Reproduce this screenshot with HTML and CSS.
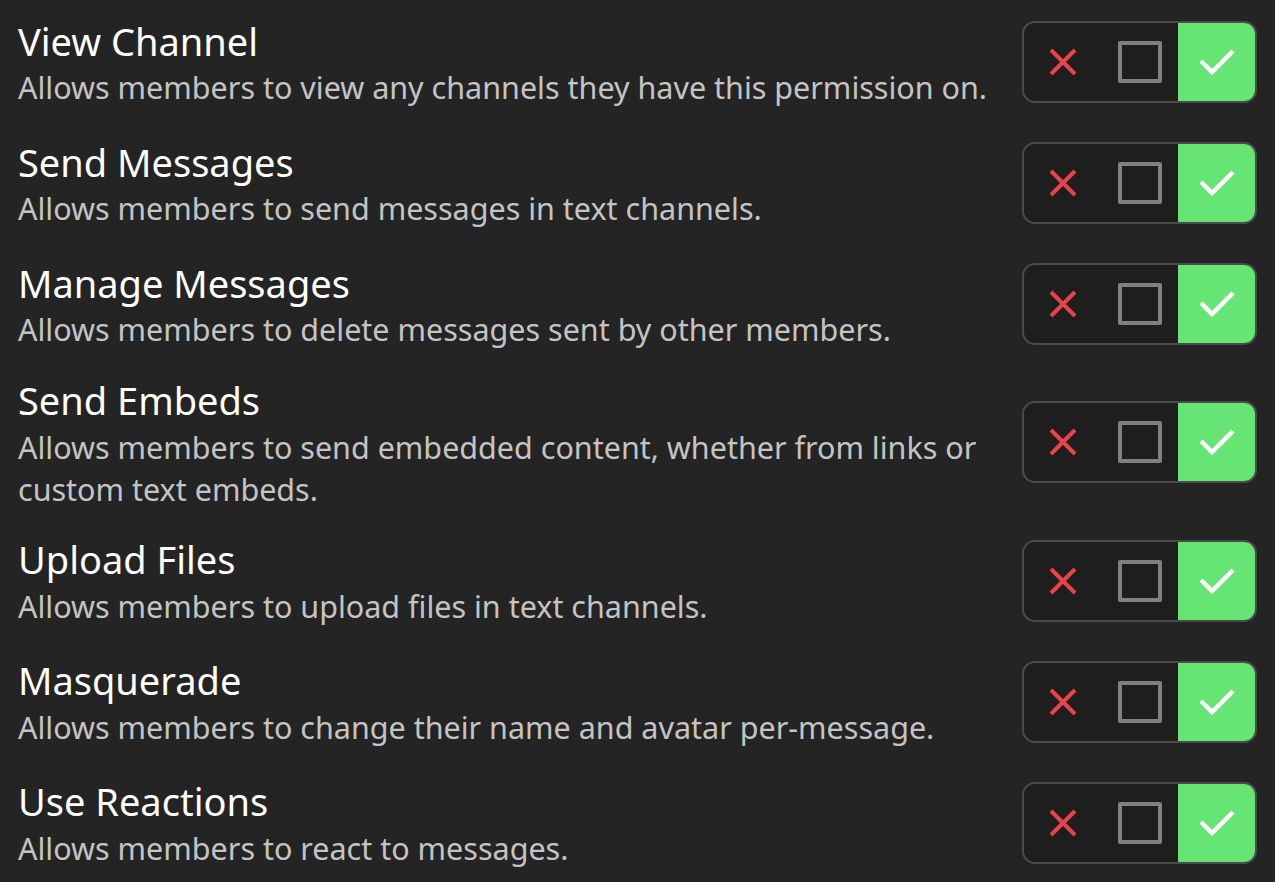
FILE: index.html
```html
<!DOCTYPE html>
<html>
<head>
<meta charset="utf-8">
<link rel="stylesheet" href="styles.css">
</head>
<body>
<div class="perms">
  <div class="perm">
    <div class="info">
      <div class="title">View Channel</div>
      <div class="desc">Allows members to view any channels they have this permission on.</div>
    </div>
    <div class="tri">
      <div class="seg"><svg width="28" height="28" viewBox="0 0 28 28"><path d="M2 2L26 26M26 2L2 26" stroke="#e8434b" stroke-width="4"/></svg></div>
      <div class="seg"><span class="box"></span></div>
      <div class="seg on"><svg width="36" height="28" viewBox="0 0 36 28"><path d="M2 13L13 24L34 3" fill="none" stroke="#fff" stroke-width="4.5"/></svg></div>
    </div>
  </div>
  <div class="perm">
    <div class="info">
      <div class="title">Send Messages</div>
      <div class="desc">Allows members to send messages in text channels.</div>
    </div>
    <div class="tri">
      <div class="seg"><svg width="28" height="28" viewBox="0 0 28 28"><path d="M2 2L26 26M26 2L2 26" stroke="#e8434b" stroke-width="4"/></svg></div>
      <div class="seg"><span class="box"></span></div>
      <div class="seg on"><svg width="36" height="28" viewBox="0 0 36 28"><path d="M2 13L13 24L34 3" fill="none" stroke="#fff" stroke-width="4.5"/></svg></div>
    </div>
  </div>
  <div class="perm">
    <div class="info">
      <div class="title">Manage Messages</div>
      <div class="desc">Allows members to delete messages sent by other members.</div>
    </div>
    <div class="tri">
      <div class="seg"><svg width="28" height="28" viewBox="0 0 28 28"><path d="M2 2L26 26M26 2L2 26" stroke="#e8434b" stroke-width="4"/></svg></div>
      <div class="seg"><span class="box"></span></div>
      <div class="seg on"><svg width="36" height="28" viewBox="0 0 36 28"><path d="M2 13L13 24L34 3" fill="none" stroke="#fff" stroke-width="4.5"/></svg></div>
    </div>
  </div>
  <div class="perm">
    <div class="info">
      <div class="title">Send Embeds</div>
      <div class="desc">Allows members to send embedded content, whether from links or custom text embeds.</div>
    </div>
    <div class="tri">
      <div class="seg"><svg width="28" height="28" viewBox="0 0 28 28"><path d="M2 2L26 26M26 2L2 26" stroke="#e8434b" stroke-width="4"/></svg></div>
      <div class="seg"><span class="box"></span></div>
      <div class="seg on"><svg width="36" height="28" viewBox="0 0 36 28"><path d="M2 13L13 24L34 3" fill="none" stroke="#fff" stroke-width="4.5"/></svg></div>
    </div>
  </div>
  <div class="perm">
    <div class="info">
      <div class="title">Upload Files</div>
      <div class="desc">Allows members to upload files in text channels.</div>
    </div>
    <div class="tri">
      <div class="seg"><svg width="28" height="28" viewBox="0 0 28 28"><path d="M2 2L26 26M26 2L2 26" stroke="#e8434b" stroke-width="4"/></svg></div>
      <div class="seg"><span class="box"></span></div>
      <div class="seg on"><svg width="36" height="28" viewBox="0 0 36 28"><path d="M2 13L13 24L34 3" fill="none" stroke="#fff" stroke-width="4.5"/></svg></div>
    </div>
  </div>
  <div class="perm">
    <div class="info">
      <div class="title">Masquerade</div>
      <div class="desc">Allows members to change their name and avatar per-message.</div>
    </div>
    <div class="tri">
      <div class="seg"><svg width="28" height="28" viewBox="0 0 28 28"><path d="M2 2L26 26M26 2L2 26" stroke="#e8434b" stroke-width="4"/></svg></div>
      <div class="seg"><span class="box"></span></div>
      <div class="seg on"><svg width="36" height="28" viewBox="0 0 36 28"><path d="M2 13L13 24L34 3" fill="none" stroke="#fff" stroke-width="4.5"/></svg></div>
    </div>
  </div>
  <div class="perm">
    <div class="info">
      <div class="title">Use Reactions</div>
      <div class="desc">Allows members to react to messages.</div>
    </div>
    <div class="tri">
      <div class="seg"><svg width="28" height="28" viewBox="0 0 28 28"><path d="M2 2L26 26M26 2L2 26" stroke="#e8434b" stroke-width="4"/></svg></div>
      <div class="seg"><span class="box"></span></div>
      <div class="seg on"><svg width="36" height="28" viewBox="0 0 36 28"><path d="M2 13L13 24L34 3" fill="none" stroke="#fff" stroke-width="4.5"/></svg></div>
    </div>
  </div>
</div>
</body>
</html>
```
FILE: styles.css
```css
html, body {
  margin: 0;
  padding: 0;
  background: #242424;
}
body {
  font-family: "Noto Sans", "Open Sans", sans-serif;
  overflow: hidden;
}
.perms {
  display: flex;
  flex-direction: column;
  gap: 21px;
  padding: 12px 18px 0 18px;
}
.perm {
  display: flex;
  align-items: center;
  gap: 22px;
  min-height: 100px;
}
.info {
  flex: 1;
  min-width: 0;
}
.title {
  color: #ffffff;
  font-size: 38px;
  line-height: 50.5px;
}
.desc {
  color: #c4c4c4;
  font-size: 30.5px;
  line-height: 42px;
}
.tri {
  flex: none;
  display: flex;
  border: 2px solid #4b4b4b;
  border-radius: 13px;
  overflow: hidden;
  background: #1e1e1e;
}
.seg {
  width: 77px;
  height: 78px;
  display: flex;
  align-items: center;
  justify-content: center;
}
.seg.on {
  background: #66e575;
}
.box {
  width: 36px;
  height: 34px;
  border: 4px solid #808080;
  border-radius: 2px;
}
```
